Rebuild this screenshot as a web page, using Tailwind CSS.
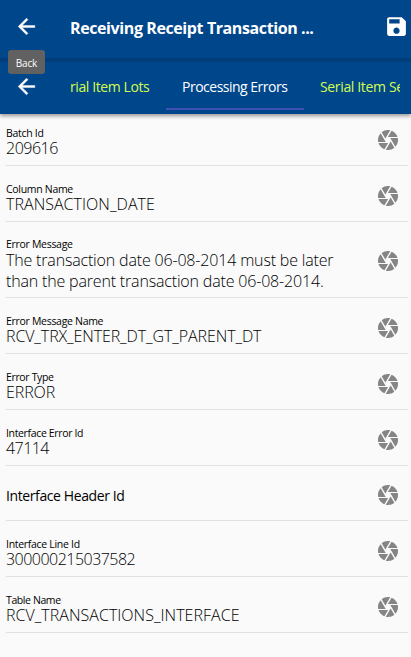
<!DOCTYPE html>
<html lang="en"><head><meta charset="utf-8"><title>Receiving Receipt Transaction</title>
<script src="https://cdn.jsdelivr.net/npm/@tailwindcss/browser@4"></script></head>
<body class="bg-[#fafafa] font-['Open_Sans',sans-serif] h-[657px] overflow-hidden text-black">
<svg class="hidden">
<symbol id="cam" viewBox="0 0 24 24"><path d="M9.4 10.5l4.77-8.26C13.47 2.09 12.75 2 12 2c-2.4 0-4.6.85-6.32 2.25l3.66 6.35.06-.1zM21.54 9c-.92-2.92-3.15-5.26-6-6.34L11.88 9h9.66zm.26 1h-7.49l.29.5 4.76 8.25C21 16.97 22 14.61 22 12c0-.69-.07-1.35-.2-2zM8.54 12l-3.9-6.75C3.01 7.03 2 9.39 2 12c0 .69.07 1.35.2 2h7.49l-1.15-2zm-6.08 3c.92 2.92 3.15 5.26 6 6.34L12.12 15H2.46zm11.27 0l-3.9 6.76c.7.15 1.42.24 2.17.24 2.4 0 4.6-.85 6.32-2.25l-3.66-6.35-.93 1.6z"/></symbol>
<symbol id="back" viewBox="0 0 24 24"><path stroke="#fff" stroke-width=".4" d="M20 11H7.83l5.59-5.59L12 4l-8 8 8 8 1.41-1.41L7.83 13H20v-2z"/></symbol>
</svg>
<header class="relative h-[114px] bg-[#00468b] text-white shadow-[0_2px_4px_rgba(0,0,0,0.4)]">
  <div class="h-[58px] flex items-center pl-[14px] pr-[2px] pb-[6px]">
    <svg class="size-[25px] fill-white shrink-0"><use href="#back"/></svg>
    <h1 class="ml-[31px] w-[260px] whitespace-nowrap text-[16px] leading-6 font-bold tracking-[-0.4px] mt-[3px]">Receiving Receipt Transaction ...</h1>
    <svg class="ml-auto size-[25px] fill-white shrink-0" viewBox="0 0 24 24"><path d="M17 3H5c-1.11 0-2 .9-2 2v14c0 1.1.89 2 2 2h14c1.1 0 2-.9 2-2V7l-4-4zm-5 16c-1.66 0-3-1.34-3-3s1.34-3 3-3 3 1.34 3 3-1.34 3-3 3zm3-10H5V5h10v4z"/></svg>
  </div>
  <div class="h-[56px] flex items-center pl-[14px] pr-[11px] bg-linear-to-b from-[#003d78] from-[2px] to-[#00468b] to-[5px]">
    <svg class="size-[25px] fill-white shrink-0"><use href="#back"/></svg>
    <nav class="ml-[31px] h-full flex-1 overflow-hidden flex whitespace-nowrap text-[14px] leading-[57px]">
      <span class="w-[96px] shrink-0 text-[#d4ff4f] tracking-[-0.4px]">rial Item Lots</span>
      <span class="w-[138px] h-[52px] shrink-0 pl-4 border-b-2 border-[#3f51b5] tracking-[-0.5px]">Processing Errors</span>
      <span class="pl-4 shrink-0 text-[#d4ff4f] tracking-[-0.35px]">Serial Item Se</span>
    </nav>
  </div>
  <div class="absolute left-2 top-[50px] w-[37px] h-6 rounded-[3px] bg-[#616161] text-[10px] leading-[26px] text-center tracking-[-0.2px]">Back</div>
</header>
<main class="pl-[6px] pr-[3px]">
  <section class="h-[52px] flex items-center border-b border-[#e0e0e0]"><div class="flex-1 pt-[4px]"><div class="text-[10.5px] leading-[14px] tracking-[-0.3px]">Batch Id</div><div class="font-light text-[16px] leading-[17px] tracking-[-0.5px]">209616</div></div><svg class="size-6 mr-2 fill-[#858585]"><use href="#cam"/></svg></section>
  <section class="h-[56px] flex items-center border-b border-[#e0e0e0]"><div class="flex-1 pt-[8px]"><div class="text-[10.5px] leading-[14px] tracking-[-0.3px]">Column Name</div><div class="font-light text-[16px] leading-[17px] tracking-[0.04px]">TRANSACTION_DATE</div></div><svg class="size-6 mr-2 mt-[5px] fill-[#858585]"><use href="#cam"/></svg></section>
  <section class="h-[76px] flex items-center border-b border-[#e0e0e0]"><div class="flex-1 pt-[9px]"><div class="text-[10.5px] leading-[14px] tracking-[-0.3px]">Error Message</div><div class="font-light text-[16px] leading-[21px] tracking-[-0.17px] -mt-px">The transaction date 06-08-2014 must be later<br>than the parent transaction date 06-08-2014.</div></div><svg class="size-6 mr-2 mt-[3px] fill-[#858585]"><use href="#cam"/></svg></section>
  <section class="h-[56px] flex items-center border-b border-[#e0e0e0]"><div class="flex-1 pt-[8px]"><div class="text-[10.5px] leading-[14px] tracking-[-0.3px]">Error Message Name</div><div class="font-light text-[16px] leading-[17px] tracking-[-0.1px]">RCV_TRX_ENTER_DT_GT_PARENT_DT</div></div><svg class="size-6 mr-2 mt-[5px] fill-[#858585]"><use href="#cam"/></svg></section>
  <section class="h-[56px] flex items-center border-b border-[#e0e0e0]"><div class="flex-1 pt-[8px]"><div class="text-[10.5px] leading-[14px] tracking-[-0.35px]">Error Type</div><div class="font-light text-[16px] leading-[17px] tracking-[-0.1px]">ERROR</div></div><svg class="size-6 mr-2 mt-[5px] fill-[#858585]"><use href="#cam"/></svg></section>
  <section class="h-[56px] flex items-center border-b border-[#e0e0e0]"><div class="flex-1 pt-[8px]"><div class="text-[10.5px] leading-[14px] tracking-[-0.35px]">Interface Error Id</div><div class="font-light text-[16px] leading-[17px] tracking-[-0.55px]">47114</div></div><svg class="size-6 mr-2 mt-[5px] fill-[#858585]"><use href="#cam"/></svg></section>
  <section class="h-[55px] flex items-center border-b border-[#e0e0e0]"><div class="flex-1 pt-[5px] text-[14px] leading-[20px] tracking-[-0.4px]">Interface Header Id</div><svg class="size-6 mr-2 mt-[4px] fill-[#858585]"><use href="#cam"/></svg></section>
  <section class="h-[56px] flex items-center border-b border-[#e0e0e0]"><div class="flex-1 pt-[8px]"><div class="text-[10.5px] leading-[14px] tracking-[-0.3px]">Interface Line Id</div><div class="font-light text-[16px] leading-[17px] tracking-[-0.52px]">300000215037582</div></div><svg class="size-6 mr-2 mt-[5px] fill-[#858585]"><use href="#cam"/></svg></section>
  <section class="h-[56px] flex items-center border-b border-[#e0e0e0]"><div class="flex-1 pt-[8px]"><div class="text-[10.5px] leading-[14px] tracking-[-0.4px]">Table Name</div><div class="font-light text-[16px] leading-[17px] tracking-[0.03px]">RCV_TRANSACTIONS_INTERFACE</div></div><svg class="size-6 mr-2 mt-[5px] fill-[#858585]"><use href="#cam"/></svg></section>
</main>
</body></html></script>
